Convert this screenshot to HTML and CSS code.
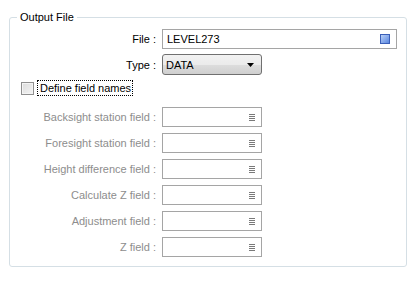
FILE: index.html
```html
<!DOCTYPE html>
<html lang="en">
<head>
    <meta charset="UTF-8">
    <title>Output File</title>
    <link rel="stylesheet" href="styles.css">
</head>
<body>
    <fieldset class="group">
        <legend class="group-title">Output File</legend>

        <div class="row row-file">
            <label class="row-label">File :</label>
            <div class="field field-file">
                <span class="field-text">LEVEL273</span>
                <span class="browse-icon"></span>
            </div>
        </div>

        <div class="row row-type">
            <label class="row-label">Type :</label>
            <div class="combo">
                <span class="field-text">DATA</span>
                <svg class="combo-arrow" width="7" height="4" viewBox="0 0 7 4">
                    <path d="M0 0h7L3.5 4z" fill="#000"></path>
                </svg>
            </div>
        </div>

        <div class="check-row">
            <span class="checkbox"></span>
            <span class="check-label">Define field names</span>
        </div>

        <div class="field-list">
            <div class="row disabled">
                <label class="row-label">Backsight station field :</label>
                <div class="field field-pick"><span class="pick-icon"></span></div>
            </div>
            <div class="row disabled">
                <label class="row-label">Foresight station field :</label>
                <div class="field field-pick"><span class="pick-icon"></span></div>
            </div>
            <div class="row disabled">
                <label class="row-label">Height difference field :</label>
                <div class="field field-pick"><span class="pick-icon"></span></div>
            </div>
            <div class="row disabled">
                <label class="row-label">Calculate Z field :</label>
                <div class="field field-pick"><span class="pick-icon"></span></div>
            </div>
            <div class="row disabled">
                <label class="row-label">Adjustment field :</label>
                <div class="field field-pick"><span class="pick-icon"></span></div>
            </div>
            <div class="row disabled">
                <label class="row-label">Z field :</label>
                <div class="field field-pick"><span class="pick-icon"></span></div>
            </div>
        </div>
    </fieldset>
</body>
</html>
```

FILE: styles.css
```css
* {
    margin: 0;
    padding: 0;
    box-sizing: border-box;
}

body {
    background: #ffffff;
    font-family: "Liberation Sans", Arial, sans-serif;
    font-size: 11px;
    color: #000000;
    padding: 10px 0 0 9px;
}

.group {
    width: 398px;
    height: 257px;
    border: 1px solid #d5dfe5;
    border-radius: 3px;
    padding: 0;
}

.group-title {
    margin-left: 7px;
    padding: 0 3px;
    line-height: 14px;
    color: #000000;
}

.row {
    display: flex;
    align-items: center;
    height: 20px;
}

.row-file {
    margin-top: 5px;
}

.row-type {
    margin-top: 5px;
    height: 21px;
}

.row-label {
    width: 146px;
    text-align: right;
    margin-right: 6px;
    white-space: nowrap;
}

.field {
    height: 20px;
    border: 1px solid #a5a5a5;
    background: #ffffff;
    display: flex;
    align-items: center;
    padding: 0 6px 0 4px;
}

.field-file {
    width: 235px;
    justify-content: space-between;
}

.browse-icon {
    width: 10px;
    height: 10px;
    border: 1px solid #3b5fb8;
    background: linear-gradient(135deg, #b9d0f7, #5a88e0);
}

.combo {
    width: 100px;
    height: 21px;
    border: 1px solid #707070;
    border-radius: 3px;
    background: linear-gradient(#f2f2f2 0%, #ebebeb 50%, #dddddd 51%, #cfcfcf 100%);
    display: flex;
    align-items: center;
    justify-content: space-between;
    padding: 0 7px 0 3px;
}

.check-row {
    display: flex;
    align-items: center;
    margin: 5px 0 0 11px;
    height: 16px;
}

.checkbox {
    width: 13px;
    height: 13px;
    border: 1px solid #8f8f8f;
    background: linear-gradient(135deg, #dcdcdc, #f4f4f4);
    box-shadow: inset 0 0 0 1px #f4f4f4;
    margin-right: 3px;
}

.check-label {
    border: 1px dotted #000000;
    padding: 1px 1px 1px 2px;
    line-height: 12px;
}

.field-list {
    display: flex;
    flex-direction: column;
    gap: 6px;
    margin-top: 11px;
}

.disabled .row-label {
    color: #8d8d8d;
}

.field-pick {
    width: 100px;
    justify-content: flex-end;
}

.pick-icon {
    width: 6px;
    height: 7px;
    background: repeating-linear-gradient(#7a7a7a 0, #7a7a7a 1px, transparent 1px, transparent 2px);
}
```
